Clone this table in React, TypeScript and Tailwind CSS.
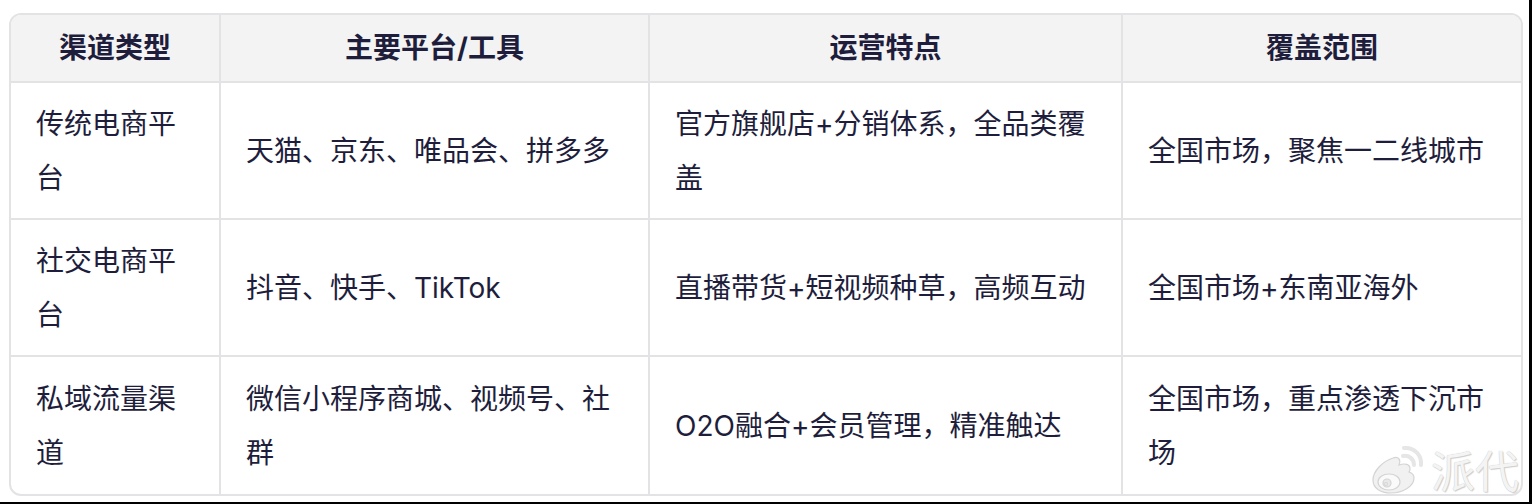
const headers = ['渠道类型', '主要平台/工具', '运营特点', '覆盖范围'];

const rows = [
  ['传统电商平台', '天猫、京东、唯品会、拼多多', '官方旗舰店+分销体系，全品类覆盖', '全国市场，聚焦一二线城市'],
  ['社交电商平台', '抖音、快手、TikTok', '直播带货+短视频种草，高频互动', '全国市场+东南亚海外'],
  ['私域流量渠道', '微信小程序商城、视频号、社群', 'O2O融合+会员管理，精准触达', '全国市场，重点渗透下沉市场'],
];

function WeiboMark() {
  return (
    <svg width="56" height="52" viewBox="0 0 56 52" fill="none">
      <g stroke="#d4d4d4" strokeWidth="1.2">
        <path d="M6 36c0-9 10-19 20-22 6-2 8 2 6 7 6-2 11-1 11 4 0 1-0.3 2-1 3 3 1 5 3 5 6 0 8-11 15-23 15C13 49 6 44 6 36z" fill="#f1f1f1" />
        <ellipse cx="22" cy="38" rx="11" ry="8" fill="#fafafa" />
        <circle cx="20" cy="39" r="4" fill="#e9e9e9" />
        <circle cx="19" cy="40" r="1.4" fill="#fff" />
        <path d="M36 12c6-1 11 3 11 9" strokeWidth="4" stroke="#e6e6e6" strokeLinecap="round" />
        <path d="M37 4c10-1 18 7 17 17" strokeWidth="4" stroke="#e6e6e6" strokeLinecap="round" />
      </g>
    </svg>
  );
}

export default function App() {
  return (
    <div
      className="w-[1532px] h-[504px] bg-white border-r-[3px] border-b-2 border-black pt-[13px] pl-[9px] relative"
      style={{ fontFamily: 'Inter, "Noto Sans CJK SC", sans-serif' }}
    >
      <div className="w-[1514px] rounded-[12px] border-2 border-[#e3e3e5] overflow-hidden text-[#1e1e3c] text-[28px]">
        <div className="grid grid-cols-[210px_429px_473px_398px] bg-[#f3f3f4] h-[68px] border-b-2 border-[#e3e3e5]">
          {headers.map((h, i) => (
            <div
              key={h}
              className={`flex items-center justify-center font-bold ${i < 3 ? 'border-r-2 border-[#e3e3e5]' : ''}`}
            >
              {h}
            </div>
          ))}
        </div>
        {rows.map((row, r) => (
          <div
            key={r}
            className={`grid grid-cols-[210px_429px_473px_398px] h-[137px] ${r < 2 ? 'border-b-2 border-[#e3e3e5]' : 'h-[136px]'}`}
          >
            {row.map((cell, i) => (
              <div
                key={i}
                className={`flex items-center pl-[25px] pr-[22px] leading-[54px] ${i < 3 ? 'border-r-2 border-[#e3e3e5]' : ''}`}
              >
                <span>{cell}</span>
              </div>
            ))}
          </div>
        ))}
      </div>

      {/* watermark */}
      <div className="absolute right-[10px] bottom-[6px] flex items-end gap-2 pointer-events-none">
        <WeiboMark />
        <span
          className="text-[44px] leading-none text-[#f4f4f4] mb-[2px]"
          style={{ textShadow: '0 0 1px #bdbdbd, 1px 1px 1px #cfcfcf' }}
        >
          派代
        </span>
      </div>
    </div>
  );
}
